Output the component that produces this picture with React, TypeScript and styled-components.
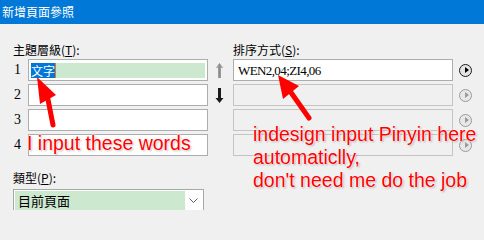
import * as React from 'react'
import styled, { createGlobalStyle } from 'styled-components'

const CJK = `"Noto Sans CJK TC", "Noto Sans CJK SC", sans-serif`
const SERIF = `"Liberation Serif", "Noto Sans CJK TC", serif`

const GlobalStyle = createGlobalStyle`
    html, body {
        margin: 0;
        padding: 0;
        background: #f0f0f0;
    }
`

// ---------------------------------------- [Window] ----------------------------------------
const Page = styled.div`
    position: relative;
    width: 484px;
    height: 210px;
    overflow: hidden;
    background: #f0f0f0;
    font-family: ${CJK};
    color: #000;
`

const TitleBar = styled.header`
    height: 24px;
    background: #0078d7;
    color: white;
    font-size: 12px;
    line-height: 24px;
    padding-left: 2px;
`

const Content = styled.div`
    padding: 18px 0 0 13px;
`

const LabelRow = styled.div`
    display: flex;
    height: 16px;
    margin-bottom: 1px;
`

const Label = styled.div`
    font-size: 12px;
    line-height: 16px;
    width: ${(props: { width?: number }) => props.width ? props.width + 'px' : 'auto'};
    u { text-decoration-thickness: 1px; text-underline-offset: 1px; }
`

const FormGrid = styled.div`
    display: grid;
    grid-template-columns: 15px 180px 25px 220px 31px;
    grid-auto-rows: 22px;
    row-gap: 3px;
    align-items: center;
`

const Num = styled.div`
    font-family: ${SERIF};
    font-size: 14px;
    padding-left: 1px;
`

interface BoxProps {
    disabled?: boolean
}

const TextBox = styled.div`
    box-sizing: border-box;
    height: 22px;
    padding: 2px;
    border: 1px solid ${(props: BoxProps) => props.disabled ? '#c4c4c4' : '#adadad'};
    background: ${(props: BoxProps) => props.disabled ? '#f0f0f0' : '#fff'};
    display: flex;
    align-items: center;
`

const Fill = styled.div`
    flex: 1;
    height: 15px;
    display: flex;
    background: #cce8cf;
`

const Selected = styled.span`
    background: #0078d7;
    color: #fff;
    font-size: 12px;
    line-height: 15px;
    padding: 0;
`

const Caret = styled.span`
    width: 1px;
    height: 15px;
    background: #e07a1f;
`

const SortText = styled.span`
    font-family: ${SERIF};
    font-size: 13px;
    letter-spacing: -0.6px;
    padding-left: 2px;
    line-height: 15px;
`

const ArrowCell = styled.div`
    display: flex;
    justify-content: center;
    padding-right: 2px;
`

const RoundButton = styled.div`
    box-sizing: border-box;
    width: 13px;
    height: 13px;
    margin-left: 6px;
    border-radius: 50%;
    border: 1px solid ${(props: BoxProps) => props.disabled ? '#9a9a9a' : '#1a1a1a'};
    background: ${(props: BoxProps) => props.disabled ? '#e8e8e8' : '#e4e4e4'};
    display: flex;
    align-items: center;
    justify-content: center;
    &::after {
        content: '';
        margin-left: 2px;
        border-style: solid;
        border-width: 3.5px 0 3.5px 4px;
        border-color: transparent transparent transparent ${(props: BoxProps) => props.disabled ? '#9a9a9a' : '#000'};
    }
`

const TypeLabel = styled(Label)`
    margin-top: 14px;
`

const Dropdown = styled.div`
    box-sizing: border-box;
    margin-top: 3px;
    width: 191px;
    height: 24px;
    padding: 1px;
    border: 1px solid #a8a8a8;
    background: #fff;
    display: flex;
`

const DropValue = styled.div`
    width: 170px;
    height: 22px;
    background: #cce8cf;
    font-size: 13px;
    line-height: 19px;
    padding-left: 3px;
    box-sizing: border-box;
`

const Chevron = styled.div`
    flex: 1;
    display: flex;
    justify-content: center;
    padding-top: 7px;
`

// ---------------------------------------- [Annotations] ----------------------------------------
const Overlay = styled.svg`
    position: absolute;
    left: 0;
    top: 0;
    pointer-events: none;
`

interface NoteProps {
    x: number
    y: number
}

const Note = styled.div`
    position: absolute;
    left: ${(props: NoteProps) => props.x}px;
    top: ${(props: NoteProps) => props.y}px;
    font-family: "Liberation Sans", Arial, sans-serif;
    font-size: 19.5px;
    line-height: 23px;
    color: #ff0000;
    white-space: nowrap;
    text-shadow: 0 0 1px #fff, 0 0 2px #fff, 0 0 2px #fff, 1px 1px 2px rgba(0, 0, 0, 0.35);
`

const UpArrow = () => (
    <svg width="9" height="15" viewBox="0 0 9 15">
        <defs>
            <linearGradient id="ug" x1="0" y1="0" x2="1" y2="0">
                <stop offset="0" stopColor="#c8c8c8" />
                <stop offset="0.5" stopColor="#8c8c8c" />
                <stop offset="1" stopColor="#c0c0c0" />
            </linearGradient>
        </defs>
        <path d="M4.5 0 L8.5 5 L6 5 L6 15 L3 15 L3 5 L0.5 5 Z" fill="url(#ug)" />
    </svg>
)

const DownArrow = () => (
    <svg width="9" height="15" viewBox="0 0 9 15">
        <path d="M3 0 L6 0 L6 10 L8.5 10 L4.5 15 L0.5 10 L3 10 Z" fill="#1a1a1a" />
    </svg>
)

const RedArrow = (props: { tip: [number, number], w1: [number, number], w2: [number, number], tail: [number, number] }) => {
    const mx = (props.w1[0] + props.w2[0]) / 2
    const my = (props.w1[1] + props.w2[1]) / 2
    return <g>
        <line x1={mx} y1={my} x2={props.tail[0]} y2={props.tail[1]} stroke="#ff0000" strokeWidth="5" strokeLinecap="round" />
        <polygon points={`${props.tip[0]},${props.tip[1]} ${props.w1[0]},${props.w1[1]} ${props.w2[0]},${props.w2[1]}`} fill="#ff0000" />
    </g>
}

export default function App() {
    const rows = [1, 2, 3, 4]
    return <>
        <GlobalStyle />
        <Page>
            <TitleBar>新增頁面參照</TitleBar>
            <Content>
                <LabelRow>
                    <Label width={220}>主題層級(<u>T</u>):</Label>
                    <Label>排序方式(<u>S</u>):</Label>
                </LabelRow>
                <FormGrid>
                    {rows.map(n => <React.Fragment key={'row' + n}>
                        <Num>{n}</Num>
                        {n === 1
                            ? <TextBox><Fill><Selected>文字</Selected><Caret /></Fill></TextBox>
                            : <TextBox />}
                        <ArrowCell>
                            {n === 1 && <UpArrow />}
                            {n === 2 && <DownArrow />}
                        </ArrowCell>
                        {n === 1
                            ? <TextBox><SortText>WEN2,04;ZI4,06</SortText></TextBox>
                            : <TextBox disabled />}
                        <RoundButton disabled={n !== 1} />
                    </React.Fragment>)}
                </FormGrid>
                <TypeLabel>類型(<u>P</u>):</TypeLabel>
                <Dropdown>
                    <DropValue>目前頁面</DropValue>
                    <Chevron>
                        <svg width="9" height="5" viewBox="0 0 9 5">
                            <path d="M0.5 0.5 L4.5 4.5 L8.5 0.5" fill="none" stroke="#606060" strokeWidth="1" />
                        </svg>
                    </Chevron>
                </Dropdown>
            </Content>

            <Overlay width="484" height="210" viewBox="0 0 484 210">
                <RedArrow tip={[37, 77]} w1={[56, 95]} w2={[40, 104]} tail={[53, 125]} />
                <RedArrow tip={[278, 75]} w1={[299, 86]} w2={[283, 99]} tail={[309, 118]} />
            </Overlay>
            <Note x={27} y={132}>I input these words</Note>
            <Note x={253} y={123}>
                indesign input Pinyin here<br />
                automaticlly,<br />
                don't need me do the job
            </Note>
        </Page>
    </>
}
